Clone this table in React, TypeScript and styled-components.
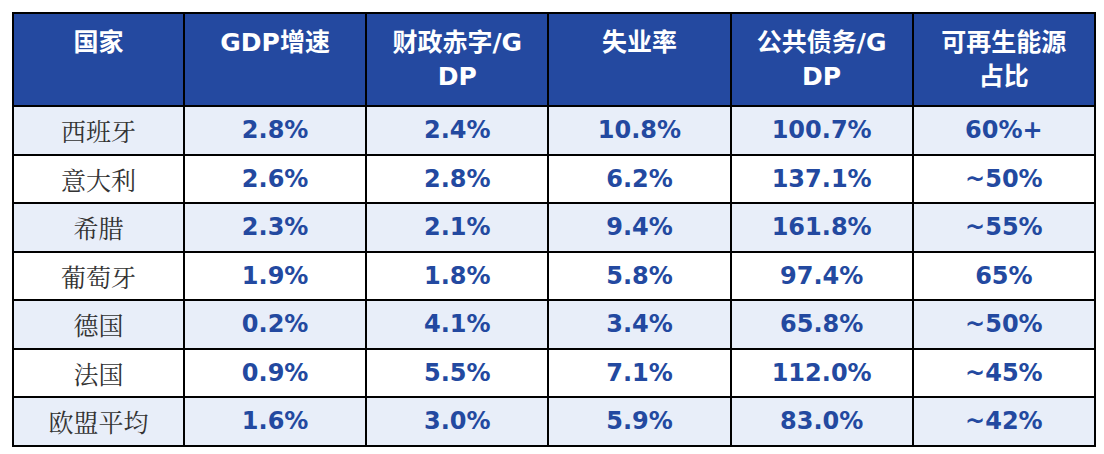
import React from 'react';
import styled, { createGlobalStyle } from 'styled-components';

type Row = {
  country: string;
  values: string[];
};

const headers = ['国家', 'GDP增速', '财政赤字/GDP', '失业率', '公共债务/GDP', '可再生能源占比'];

const rows: Row[] = [
  { country: '西班牙', values: ['2.8%', '2.4%', '10.8%', '100.7%', '60%+'] },
  { country: '意大利', values: ['2.6%', '2.8%', '6.2%', '137.1%', '~50%'] },
  { country: '希腊', values: ['2.3%', '2.1%', '9.4%', '161.8%', '~55%'] },
  { country: '葡萄牙', values: ['1.9%', '1.8%', '5.8%', '97.4%', '65%'] },
  { country: '德国', values: ['0.2%', '4.1%', '3.4%', '65.8%', '~50%'] },
  { country: '法国', values: ['0.9%', '5.5%', '7.1%', '112.0%', '~45%'] },
  { country: '欧盟平均', values: ['1.6%', '3.0%', '5.9%', '83.0%', '~42%'] },
];

const GlobalStyle = createGlobalStyle`
  html, body {
    margin: 0;
    padding: 0;
    background: #ffffff;
  }
`;

export default function App() {
  return (
    <>
      <GlobalStyle />
      <Page>
        <DataTable>
          <colgroup>
            <col style={{ width: 171 }} />
            {headers.slice(1).map((h) => (
              <col key={h} />
            ))}
          </colgroup>
          <thead>
            <tr>
              {headers.map((h) => (
                <HeadCell key={h}>{h}</HeadCell>
              ))}
            </tr>
          </thead>
          <tbody>
            {rows.map((row, index) => (
              <BodyRow key={row.country} $striped={index % 2 === 0}>
                <CountryCell>{row.country}</CountryCell>
                {row.values.map((v, i) => (
                  <ValueCell key={i}>{v}</ValueCell>
                ))}
              </BodyRow>
            ))}
          </tbody>
        </DataTable>
      </Page>
    </>
  );
}

const Page = styled.div`
  padding: 12px 8px 0 12px;
`;

const DataTable = styled.table`
  width: 1084px;
  table-layout: fixed;
  border-collapse: collapse;
  border: 2px solid #000;
`;

const HeadCell = styled.th`
  background: #2449a0;
  color: #ffffff;
  border: 2px solid #000;
  padding: 12px 20px 11px;
  vertical-align: top;
  text-align: center;
  font-family: 'DejaVu Sans', 'Noto Sans CJK SC', sans-serif;
  font-weight: 700;
  font-size: 25px;
  line-height: 34px;
  word-break: break-all;
`;

type BodyRowProps = {
  $striped: boolean;
};

const BodyRow = styled.tr<BodyRowProps>`
  height: 48.5px;
  background: ${({ $striped }) => ($striped ? '#e8eef9' : '#ffffff')};
`;

const CountryCell = styled.td`
  border: 2px solid #000;
  padding: 0;
  text-align: center;
  vertical-align: middle;
  color: #333333;
  font-family: 'Noto Serif CJK SC', 'Noto Sans CJK SC', serif;
  font-weight: 400;
  font-size: 25px;
  line-height: 30px;
`;

const ValueCell = styled.td`
  border: 2px solid #000;
  padding: 0;
  text-align: center;
  vertical-align: middle;
  color: #2349a0;
  font-family: 'DejaVu Sans', sans-serif;
  font-weight: 700;
  font-size: 24px;
  line-height: 30px;
`;
